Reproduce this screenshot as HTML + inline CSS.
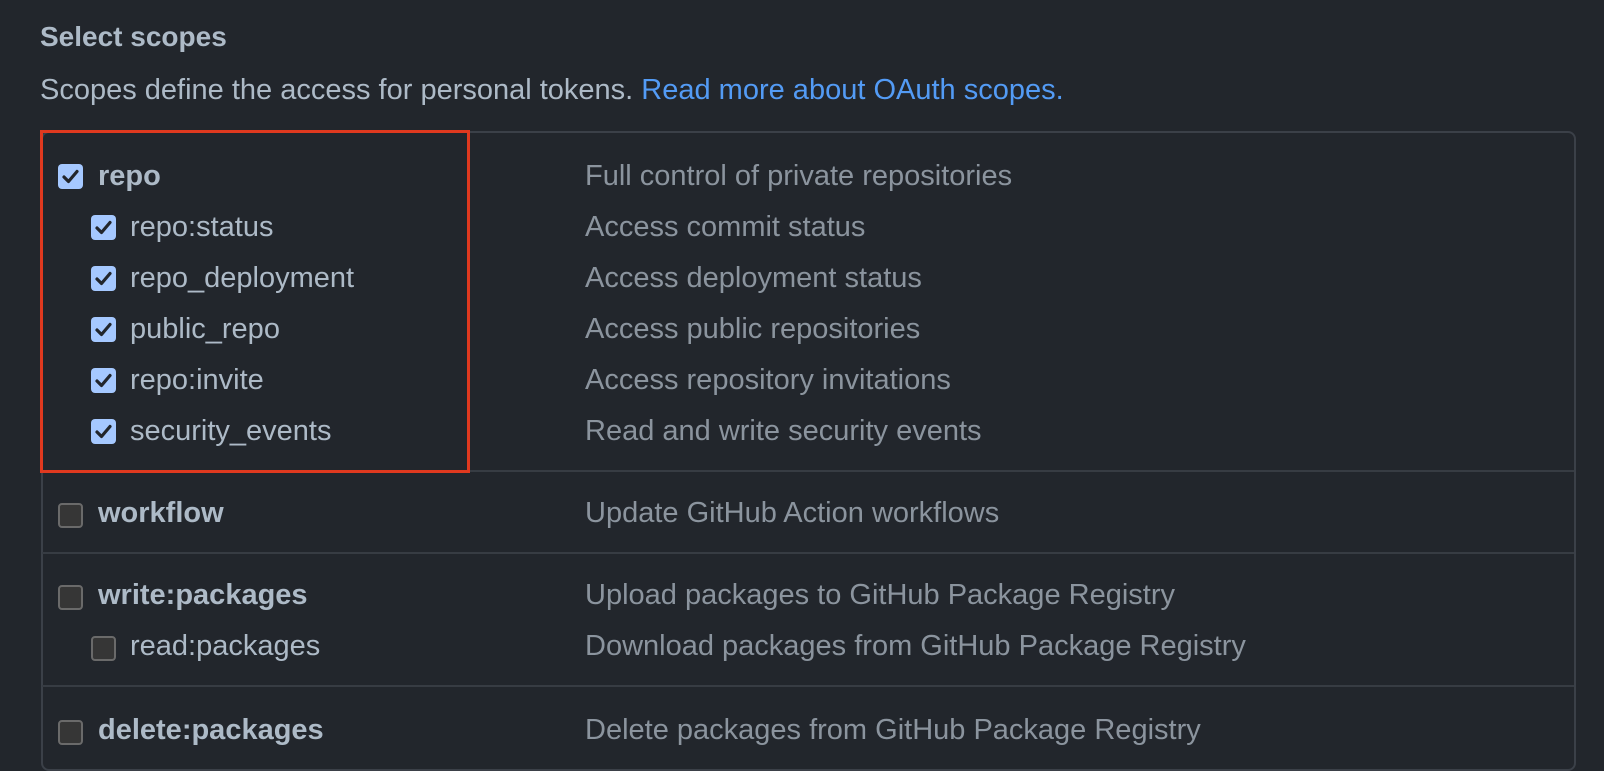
<!DOCTYPE html>
<html><head><meta charset="utf-8"><style>
body{margin:0;width:1604px;height:748px;background:#22262c;font-family:"Liberation Sans",sans-serif;color:#adbac7;overflow:hidden;position:relative}
.t{position:absolute;white-space:nowrap;font-size:29px;line-height:36px}
.b{font-weight:bold}
.d{color:#8b949e;left:585px}
.cb{position:absolute;width:25px;height:25px;border-radius:4px;box-sizing:border-box}
.on{background:#a5c8ff}
.off{background:#363636;border:2px solid #6a6a6a}
.hr{position:absolute;left:42px;width:1532px;height:2px;background:#373c43}
</style></head><body>
<div class="t b" style="left:40px;top:19px;font-size:28px">Select scopes</div>
<div class="t" style="left:40px;top:72px">Scopes define the access for personal tokens. <span style="color:#539bf5">Read more about OAuth scopes.</span></div>
<div style="position:absolute;left:41px;top:131px;width:1535px;height:640px;border:2px solid #3b4048;border-radius:8px;box-sizing:border-box"></div>
<div class="hr" style="top:470px"></div>
<div class="hr" style="top:552px"></div>
<div class="hr" style="top:685px"></div>
<div style="position:absolute;left:40px;top:130px;width:430px;height:343px;border:3px solid #e0391f;box-sizing:border-box"></div>

<svg width="0" height="0" style="position:absolute"><defs><symbol id="ck" viewBox="0 0 25 25"><path d="M6 13l4.5 4.5 8.5-10" fill="none" stroke="#22262c" stroke-width="3.2" stroke-linecap="round" stroke-linejoin="round"/></symbol></defs></svg>

<svg class="cb on" style="left:58px;top:164px"><use href="#ck"/></svg>
<div class="t b" style="left:98px;top:158px">repo</div><div class="t d" style="top:158px">Full control of private repositories</div>

<svg class="cb on" style="left:91px;top:215px"><use href="#ck"/></svg>
<div class="t" style="left:130px;top:209px">repo:status</div><div class="t d" style="top:209px">Access commit status</div>

<svg class="cb on" style="left:91px;top:266px"><use href="#ck"/></svg>
<div class="t" style="left:130px;top:260px">repo_deployment</div><div class="t d" style="top:260px">Access deployment status</div>

<svg class="cb on" style="left:91px;top:317px"><use href="#ck"/></svg>
<div class="t" style="left:130px;top:311px">public_repo</div><div class="t d" style="top:311px">Access public repositories</div>

<svg class="cb on" style="left:91px;top:368px"><use href="#ck"/></svg>
<div class="t" style="left:130px;top:362px">repo:invite</div><div class="t d" style="top:362px">Access repository invitations</div>

<svg class="cb on" style="left:91px;top:419px"><use href="#ck"/></svg>
<div class="t" style="left:130px;top:413px">security_events</div><div class="t d" style="top:413px">Read and write security events</div>

<div class="cb off" style="left:58px;top:503px"></div>
<div class="t b" style="left:98px;top:495px">workflow</div><div class="t d" style="top:495px">Update GitHub Action workflows</div>

<div class="cb off" style="left:58px;top:585px"></div>
<div class="t b" style="left:98px;top:577px">write:packages</div><div class="t d" style="top:577px">Upload packages to GitHub Package Registry</div>

<div class="cb off" style="left:91px;top:636px"></div>
<div class="t" style="left:130px;top:628px">read:packages</div><div class="t d" style="top:628px">Download packages from GitHub Package Registry</div>

<div class="cb off" style="left:58px;top:720px"></div>
<div class="t b" style="left:98px;top:712px">delete:packages</div><div class="t d" style="top:712px">Delete packages from GitHub Package Registry</div>
</body></html>
